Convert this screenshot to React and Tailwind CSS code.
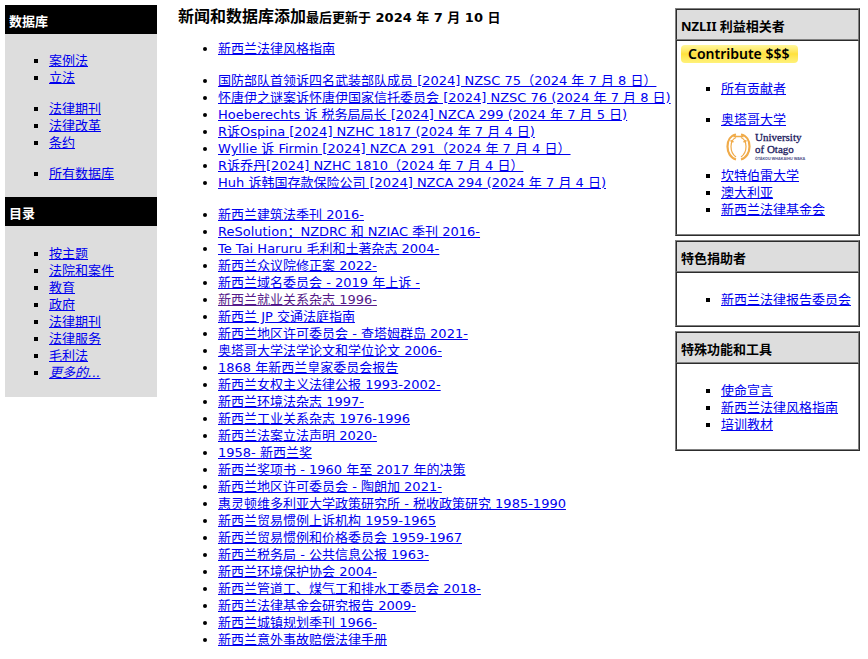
const contributors = [
  [{ text: '所有贡献者' }],
  [
    { text: '奥塔哥大学', logo: true },
    { text: '坎特伯雷大学' },
    { text: '澳大利亚' },
    { text: '新西兰法律基金会' },
  ],
];

const databases = [
  [{ text: '案例法' }, { text: '立法' }],
  [{ text: '法律期刊' }, { text: '法律改革' }, { text: '条约' }],
  [{ text: '所有数据库' }],
];

const catalogue = [
  [
    { text: '按主题' },
    { text: '法院和案件' },
    { text: '教育' },
    { text: '政府' },
    { text: '法律期刊' },
    { text: '法律服务' },
    { text: '毛利法' },
    { text: '更多的...', italic: true },
  ],
];

const news = [
  [{ text: '新西兰法律风格指南' }],
  [
    { text: '国防部队首领诉四名武装部队成员 [2024] NZSC 75（2024 年 7 月 8 日）' },
    { text: '怀唐伊之谜案诉怀唐伊国家信托委员会 [2024] NZSC 76 (2024 年 7 月 8 日)' },
    { text: 'Hoeberechts 诉 税务局局长 [2024] NZCA 299 (2024 年 7 月 5 日)' },
    { text: 'R诉Ospina [2024] NZHC 1817 (2024 年 7 月 4 日)' },
    { text: 'Wyllie 诉 Firmin [2024] NZCA 291（2024 年 7 月 4 日）' },
    { text: 'R诉乔丹[2024] NZHC 1810（2024 年 7 月 4 日）' },
    { text: 'Huh 诉韩国存款保险公司 [2024] NZCA 294 (2024 年 7 月 4 日)' },
  ],
  [
    { text: '新西兰建筑法季刊 2016-' },
    { text: 'ReSolution：NZDRC 和 NZIAC 季刊 2016-' },
    { text: 'Te Tai Haruru 毛利和土著杂志 2004-' },
    { text: '新西兰众议院修正案 2022-' },
    { text: '新西兰域名委员会 - 2019 年上诉 -' },
    { text: '新西兰就业关系杂志 1996-', visited: true },
    { text: '新西兰 JP 交通法庭指南' },
    { text: '新西兰地区许可委员会 - 查塔姆群岛 2021-' },
    { text: '奥塔哥大学法学论文和学位论文 2006-' },
    { text: '1868 年新西兰皇家委员会报告' },
    { text: '新西兰女权主义法律公报 1993-2002-' },
    { text: '新西兰环境法杂志 1997-' },
    { text: '新西兰工业关系杂志 1976-1996' },
    { text: '新西兰法案立法声明 2020-' },
    { text: '1958- 新西兰奖' },
    { text: '新西兰奖项书 - 1960 年至 2017 年的决策' },
    { text: '新西兰地区许可委员会 - 陶朗加 2021-' },
    { text: '惠灵顿维多利亚大学政策研究所 - 税收政策研究 1985-1990' },
    { text: '新西兰贸易惯例上诉机构 1959-1965' },
    { text: '新西兰贸易惯例和价格委员会 1959-1967' },
    { text: '新西兰税务局 - 公共信息公报 1963-' },
    { text: '新西兰环境保护协会 2004-' },
    { text: '新西兰管道工、煤气工和排水工委员会 2018-' },
    { text: '新西兰法律基金会研究报告 2009-' },
    { text: '新西兰城镇规划季刊 1966-' },
    { text: '新西兰意外事故赔偿法律手册' },
  ],
];

function OtagoLogo() {
  return (
    <svg className="ml-1 mt-1 block h-[35px] w-[84px]" viewBox="0 0 84 35" role="img" aria-label="University of Otago">
      <g fill="none" stroke="#f0ab4a">
        <path d="M11 2.500C5.500 3.500 2.500 8.500 2.500 14.500S5.500 26 11 27.500" strokeWidth="2.200" />
        <path d="M16 2.500C21.500 3.500 24.500 8.500 24.500 14.500S21.500 26 16 27.500" strokeWidth="2.200" />
        <path d="M11 5.500C7.500 7 6 10.500 6 14.500s1.500 8 5 10.500M16 5.500c3.500 1.500 5 5 5 9s-1.500 8-5 10.500" strokeWidth="1.200" />
        <path d="M8.500 4.500h10M5.500 8.500l3 1.500M21.500 8.500l-3 1.500" strokeWidth="1.500" />
      </g>
      <g fill="#1c2060" stroke="#1c2060" strokeWidth="0.300" fontFamily="'Liberation Serif', serif">
        <text x="30" y="9" fontSize="11">University</text>
        <text x="30" y="21" fontSize="11">of Otago</text>
      </g>
      <text x="30" y="28" fontSize="3.700" fontWeight="bold" fill="#4a4d86" fontFamily="Inter, sans-serif">ŌTĀKOU WHAKAIHU WAKA</text>
    </svg>
  );
}

function LinkList({ groups, marker, className }) {
  return (
    <div className={`flex flex-col whitespace-nowrap ${className}`}>
      {groups.map((items, i) => (
        <ul key={i} className={marker}>
          {items.map((item) => (
            <li key={item.text}>
              <a
                href="#"
                className={`underline ${item.visited ? 'text-[#551a8b]' : 'text-[#0000ee]'} ${item.italic ? 'italic' : ''}`}
              >
                {item.text}
              </a>
              {item.logo && <OtagoLogo />}
            </li>
          ))}
        </ul>
      ))}
    </div>
  );
}

function MenuSection({ title, groups, className }) {
  return (
    <section className="bg-[#dddddd]">
      <h2 className="bg-black px-1 pt-2 pb-1 font-bold text-white">{title}</h2>
      <LinkList groups={groups} marker="list-[square] pl-11" className={`gap-[14px] ${className}`} />
    </section>
  );
}

function Panel({ title, groups, className, children }) {
  return (
    <section className="border border-t-[#808080] border-r-[#2c2c2c] border-b-[#2c2c2c] border-l-[#808080]">
      <h2 className="border border-t-[#2c2c2c] border-r-[#808080] border-b-[#808080] border-l-[#2c2c2c] bg-[#dddddd] px-1 pt-2 pb-1 font-['Noto_Sans','Noto_Sans_CJK_SC',sans-serif] font-bold">
        {title}
      </h2>
      <div className="border border-t-[#2c2c2c] border-r-[#808080] border-b-[#808080] border-l-[#2c2c2c]">
        {children}
        <LinkList groups={groups} marker="list-[square] pl-11" className={`gap-[14px] ${className}`} />
      </div>
    </section>
  );
}

export default function App() {
  return (
    <div className="flex items-start bg-white pt-[5px] pr-2 pl-[5px] font-['DejaVu_Sans','Noto_Sans_CJK_SC',sans-serif] text-[13px] leading-[17px] text-black">
      <nav className="w-[152px] shrink-0">
        <MenuSection title="数据库" groups={databases} className="pt-[18px] pb-[15px]" />
        <MenuSection title="目录" groups={catalogue} className="pt-[19px] pb-4" />
      </nav>
      <main className="min-w-0 flex-1 pl-[21px]">
        <h1 className="pt-[2px] text-[16px] leading-5 font-bold whitespace-nowrap">
          新闻和数据库添加<span className="text-[13px]">最后更新于 2024 年 7 月 10 日</span>
        </h1>
        <LinkList groups={news} marker="list-disc pl-10" className="gap-[15px] pt-3" />
      </main>
      <aside className="flex w-[185px] shrink-0 flex-col gap-1 pt-[3px]">
        <Panel title="NZLII 利益相关者" groups={contributors} className="pt-[17px] pb-4">
          <a
            href="#"
            className="mt-1 ml-1 block h-[18px] w-[117px] rounded bg-linear-to-b from-[#fff79a] via-[#ffe13a] to-[#fff27a] pl-[7px] font-['Noto_Sans',sans-serif] text-[14px] font-semibold whitespace-nowrap text-black"
          >
            Contribute $$$
          </a>
        </Panel>
        <Panel title="特色捐助者" groups={[[{ text: '新西兰法律报告委员会' }]]} className="pt-[18px] pb-[17px]" />
        <Panel
          title="特殊功能和工具"
          groups={[[{ text: '使命宣言' }, { text: '新西兰法律风格指南' }, { text: '培训教材' }]]}
          className="pt-[18px] pb-4"
        />
      </aside>
    </div>
  );
}
